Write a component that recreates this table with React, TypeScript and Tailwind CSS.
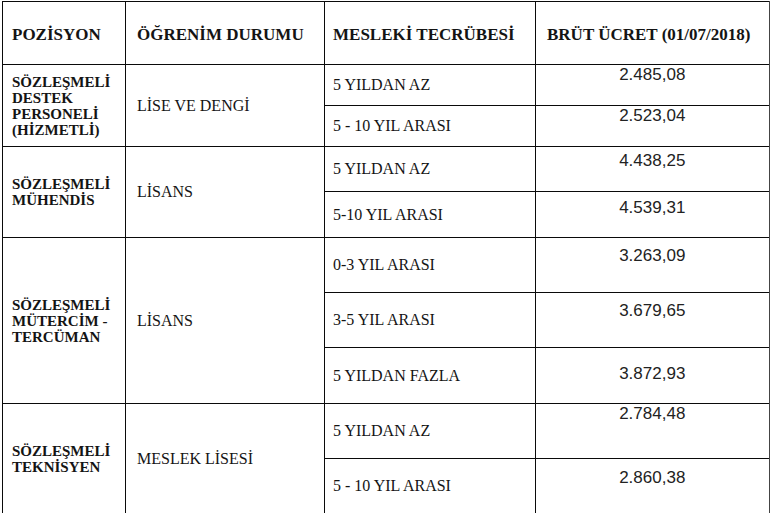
type Row = { exp: string; fee: string; h: string; pt: string };
type Group = { pos: string[]; edu: string; rows: Row[] };

const groups: Group[] = [
  {
    pos: ['SÖZLEŞMELİ', 'DESTEK', 'PERSONELİ', '(HİZMETLİ)'],
    edu: 'LİSE VE DENGİ',
    rows: [
      { exp: '5 YILDAN AZ', fee: '2.485,08', h: 'h-[41px]', pt: 'pt-0' },
      { exp: '5 - 10 YIL ARASI', fee: '2.523,04', h: 'h-[41px]', pt: 'pt-0' },
    ],
  },
  {
    pos: ['SÖZLEŞMELİ', 'MÜHENDİS'],
    edu: 'LİSANS',
    rows: [
      { exp: '5 YILDAN AZ', fee: '4.438,25', h: 'h-[45px]', pt: 'pt-[4px]' },
      { exp: '5-10 YIL ARASI', fee: '4.539,31', h: 'h-[46px]', pt: 'pt-[6px]' },
    ],
  },
  {
    pos: ['SÖZLEŞMELİ', 'MÜTERCİM -', 'TERCÜMAN'],
    edu: 'LİSANS',
    rows: [
      { exp: '0-3 YIL ARASI', fee: '3.263,09', h: 'h-[55px]', pt: 'pt-[8px]' },
      { exp: '3-5 YIL ARASI', fee: '3.679,65', h: 'h-[55px]', pt: 'pt-[8px]' },
      { exp: '5 YILDAN FAZLA', fee: '3.872,93', h: 'h-[56px]', pt: 'pt-[16px]' },
    ],
  },
  {
    pos: ['SÖZLEŞMELİ', 'TEKNİSYEN'],
    edu: 'MESLEK LİSESİ',
    rows: [
      { exp: '5 YILDAN AZ', fee: '2.784,48', h: 'h-[55px]', pt: 'pt-0' },
      { exp: '5 - 10 YIL ARASI', fee: '2.860,38', h: 'h-[55px]', pt: 'pt-[9px]' },
    ],
  },
];

const cell = 'border border-[#0a0a0a]';

export default function App() {
  return (
    <div className="w-[770px] h-[513px] overflow-hidden bg-white pt-[1px] pl-[2px] font-['Liberation_Serif',serif] text-[#141414]">
      <table className="border-collapse table-fixed w-[767px]">
        <colgroup>
          <col className="w-[123px]" />
          <col className="w-[199px]" />
          <col className="w-[211px]" />
          <col className="w-[234px]" />
        </colgroup>
        <thead>
          <tr className="h-[63px] text-[17px] font-bold text-left">
            <th className={`${cell} pl-[9px] pt-[3px]`}>POZİSYON</th>
            <th className={`${cell} pl-[11px] pt-[3px]`}>ÖĞRENİM DURUMU</th>
            <th className={`${cell} pl-[8px] pt-[3px]`}>MESLEKİ TECRÜBESİ</th>
            <th className={`${cell} border-r-2 border-r-[#444] pl-[11px] pt-[3px]`}>BRÜT ÜCRET (01/07/2018)</th>
          </tr>
        </thead>
        <tbody>
          {groups.map((g) =>
            g.rows.map((r, i) => (
              <tr key={g.pos.join() + r.exp} className={r.h}>
                {i === 0 && (
                  <>
                    <td rowSpan={g.rows.length} className={`${cell} pl-[9px] align-middle text-[15px] font-bold leading-[16px]`}>
                      {g.pos.map((p) => (
                        <div key={p}>{p}</div>
                      ))}
                    </td>
                    <td rowSpan={g.rows.length} className={`${cell} pl-[11px] align-middle text-[16px]`}>
                      {g.edu}
                    </td>
                  </>
                )}
                <td className={`${cell} pl-[8px] align-middle text-[16px]`}>{r.exp}</td>
                <td
                  className={`${cell} border-r-2 border-r-[#444] ${r.pt} align-top text-center text-[17px] leading-[20px] font-['Liberation_Sans',Arial,sans-serif] text-[#222]`}
                >
                  {r.fee}
                </td>
              </tr>
            ))
          )}
        </tbody>
      </table>
    </div>
  );
}
